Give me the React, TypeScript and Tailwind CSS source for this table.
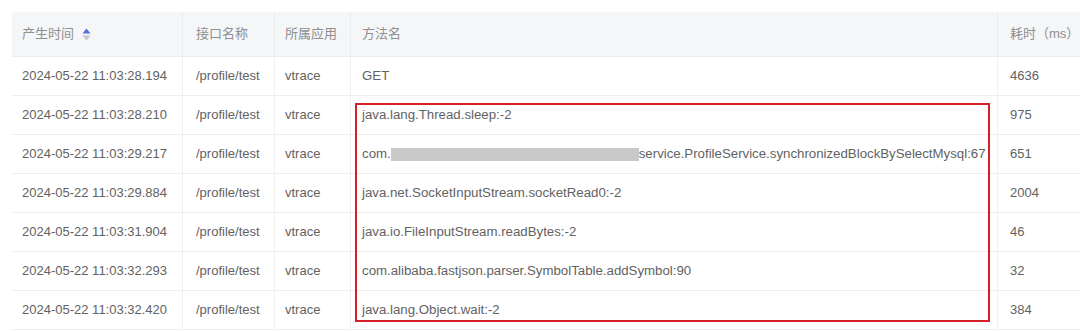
import React from "react";

const rows = [
  { t: "2024-05-22 11:03:28.194", m: "GET", ms: "4636" },
  { t: "2024-05-22 11:03:28.210", m: "java.lang.Thread.sleep:-2", ms: "975" },
  { t: "2024-05-22 11:03:29.217", m: "__BLUR__", ms: "651" },
  { t: "2024-05-22 11:03:29.884", m: "java.net.SocketInputStream.socketRead0:-2", ms: "2004" },
  { t: "2024-05-22 11:03:31.904", m: "java.io.FileInputStream.readBytes:-2", ms: "46" },
  { t: "2024-05-22 11:03:32.293", m: "com.alibaba.fastjson.parser.SymbolTable.addSymbol:90", ms: "32" },
  { t: "2024-05-22 11:03:32.420", m: "java.lang.Object.wait:-2", ms: "384" },
];

function SortIcon() {
  return (
    <svg width="9" height="13" viewBox="0 0 9 13" className="ml-[8px]">
      <path d="M4.5 0.5 L8.5 5.5 L0.5 5.5 Z" fill="#5a6fd1" />
      <path d="M4.5 12.5 L8.5 7.5 L0.5 7.5 Z" fill="#c3c6d0" />
    </svg>
  );
}

export default function App() {
  const font = { fontFamily: '"Liberation Sans", Arial, "Noto Sans CJK SC", sans-serif' };
  return (
    <div className="relative w-[1080px] h-[332px] overflow-hidden bg-white" style={font}>
      <div className="pt-[12px] pl-[12px]">
        <div className="w-[1120px] text-[13px] text-[#626262]">
          {/* header */}
          <div className="flex h-[45px] bg-[#f5f6f8] text-[#8f8f8f] border-b border-[#ececec]">
            <div className="w-[171px] flex items-center pl-[10px] border-r border-[#ececec]">
              产生时间
              <SortIcon />
            </div>
            <div className="w-[92px] flex items-center pl-[13px] border-r border-[#ececec]">接口名称</div>
            <div className="w-[76px] flex items-center pl-[10px] border-r border-[#ececec]">所属应用</div>
            <div className="w-[647px] flex items-center pl-[11px] border-r border-[#ececec]">方法名</div>
            <div className="flex-1 flex items-center pl-[12px]">耗时（ms）</div>
          </div>
          {rows.map((r, i) => (
            <div key={i} className="flex h-[39px] border-b border-[#efefef]">
              <div className="w-[171px] flex items-center pl-[10px] border-r border-[#f0f0f0]">{r.t}</div>
              <div className="w-[92px] flex items-center pl-[13px] border-r border-[#f0f0f0]">/profile/test</div>
              <div className="w-[76px] flex items-center pl-[10px] border-r border-[#f0f0f0]">vtrace</div>
              <div className="w-[647px] flex items-center pl-[11px] border-r border-[#f0f0f0] whitespace-nowrap text-[13.25px]">
                {r.m === "__BLUR__" ? (
                  <>
                    <span>com.</span>
                    <span className="inline-block w-[248px] h-[13px] bg-[#c9c9c9] blur-[0.5px]" />
                    <span>service.ProfileService.synchronizedBlockBySelectMysql:67</span>
                  </>
                ) : (
                  r.m
                )}
              </div>
              <div className="flex-1 flex items-center pl-[12px]">{r.ms}</div>
            </div>
          ))}
        </div>
      </div>
      <div className="absolute left-[355px] top-[103px] w-[635px] h-[219px] border-2 border-[#d61f26]" />
    </div>
  );
}
